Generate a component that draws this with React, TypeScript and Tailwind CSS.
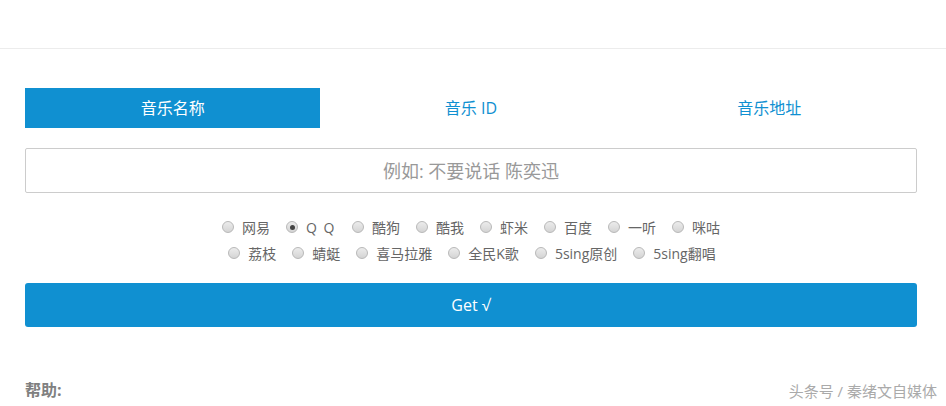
import { useState } from "react";

const TABS = ["音乐名称", "音乐 ID", "音乐地址"];

const ROW1 = ["网易", "Q Q", "酷狗", "酷我", "虾米", "百度", "一听", "咪咕"];
const ROW2 = ["荔枝", "蜻蜓", "喜马拉雅", "全民K歌", "5sing原创", "5sing翻唱"];

function Radio({ label, checked, onPick }: { label: string; checked: boolean; onPick: () => void }) {
  return (
    <label onClick={onPick} className="flex items-center cursor-pointer mr-[16px] last:mr-0">
      <span className="w-[12px] h-[12px] rounded-full border border-[#b8b8b8] bg-gradient-to-b from-[#ececec] to-[#d4d4d4] flex items-center justify-center">
        {checked ? <span className="w-[5px] h-[5px] rounded-full bg-[#444]" /> : null}
      </span>
      <span className={`ml-[8px] text-[14px] text-[#666] ${label === "Q Q" ? "tracking-[1.5px]" : ""}`}>{label}</span>
    </label>
  );
}

export default function App() {
  const [tab, setTab] = useState(0);
  const [source, setSource] = useState("Q Q");

  return (
    <div
      className="relative w-[946px] h-[406px] bg-white overflow-hidden"
      style={{ fontFamily: '"Open Sans", "Noto Sans CJK SC", sans-serif' }}
    >
      {/* top bar */}
      <div className="h-[49px] border-b border-[#ececec]" />

      <div className="px-[25px] pr-[29px] pt-[39px]">
        {/* tabs */}
        <div className="grid grid-cols-3 gap-[3px] h-[40px]">
          {TABS.map((t, i) => (
            <button
              key={t}
              onClick={() => setTab(i)}
              className={`text-[16px] flex items-center justify-center ${
                tab === i ? "bg-[#1090d1] text-white" : "bg-white text-[#1090d1]"
              }`}
            >
              {t}
            </button>
          ))}
        </div>

        {/* input */}
        <input
          className="mt-[20px] w-full h-[45px] border border-[#cccccc] rounded-[2px] text-center text-[18px] text-[#555] placeholder:text-[#999] outline-none"
          placeholder="例如: 不要说话 陈奕迅"
        />

        {/* sources */}
        <div className="mt-[21px] flex flex-col items-center">
          <div className="h-[26px] flex items-center">
            {ROW1.map((s) => (
              <Radio key={s} label={s} checked={source === s} onPick={() => setSource(s)} />
            ))}
          </div>
          <div className="h-[26px] flex items-center pl-[2px]">
            {ROW2.map((s) => (
              <Radio key={s} label={s} checked={source === s} onPick={() => setSource(s)} />
            ))}
          </div>
        </div>

        {/* submit */}
        <button className="mt-[17px] w-full h-[44px] bg-[#1090d1] rounded-[3px] text-white text-[16px]">
          Get √
        </button>

        <div className="mt-[51px] text-[16px] font-bold text-[#808080]">帮助:</div>
      </div>

      {/* watermark */}
      <div className="absolute right-[9px] bottom-[4px] text-[15px] text-[#aaa]">
        头条号 / 秦绪文自媒体
      </div>
    </div>
  );
}
